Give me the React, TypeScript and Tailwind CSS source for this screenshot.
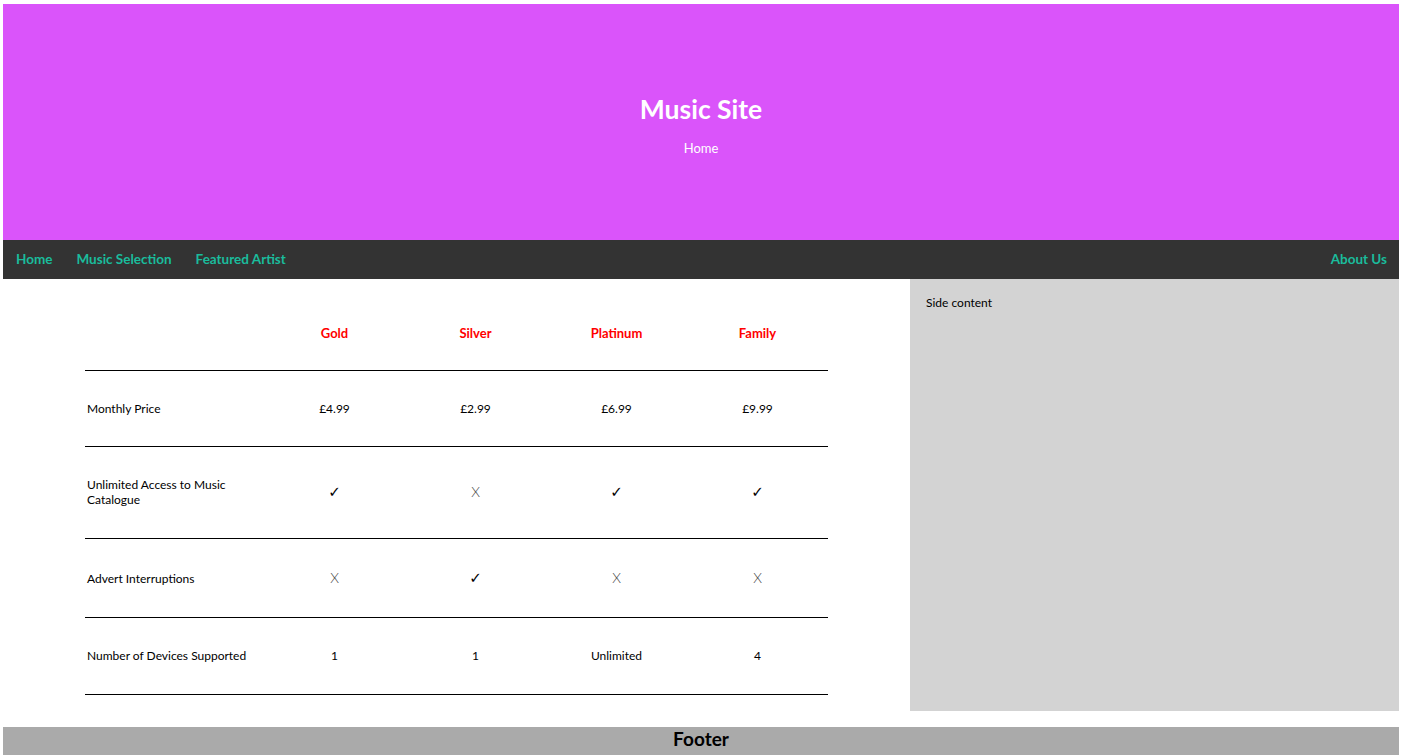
import React from "react";

const rows: { label: string; cells: string[]; pad: string }[] = [
  { label: "Monthly Price", cells: ["£4.99", "£2.99", "£6.99", "£9.99"], pad: "pt-[30px] pb-[30px]" },
  { label: "Unlimited Access to Music Catalogue", cells: ["✓", "X", "✓", "✓"], pad: "pt-[30px] pb-[31px]" },
  { label: "Advert Interruptions", cells: ["X", "✓", "X", "X"], pad: "pt-[30px] pb-[30px]" },
  { label: "Number of Devices Supported", cells: ["1", "1", "Unlimited", "4"], pad: "pt-[30px] pb-[31px]" },
];

function Cell({ v }: { v: string }) {
  if (v === "X")
    return <span className="font-light text-[14px] text-[#444]">X</span>;
  if (v === "✓")
    return (
      <span
        className="inline-block align-middle text-[15px] leading-[18px] text-black"
        style={{ fontFamily: "'DejaVu Sans', sans-serif" }}
      >
        ✓
      </span>
    );
  return <span>{v}</span>;
}

export default function App() {
  return (
    <div
      className="pl-[3px] pr-[5px] pt-[4px] bg-white text-black"
      style={{ fontFamily: "Lato, 'Open Sans', sans-serif" }}
    >
      <header className="bg-[#da54fa] h-[236px] flex flex-col items-center pt-[90px] text-white">
        <h1 className="text-[26.5px] leading-[30px] font-bold">Music Site</h1>
        <p className="mt-[16px] text-[13px] leading-[16px]">Home</p>
      </header>
      <nav className="bg-[#333333] h-[39px] flex items-center px-[1px] text-[13.5px] font-bold text-[#1abc9c]">
        <a className="px-[12px]">Home</a>
        <a className="px-[12px]">Music Selection</a>
        <a className="px-[12px]">Featured Artist</a>
        <a className="pl-[12px] pr-[11px] ml-auto">About Us</a>
      </nav>
      <div className="flex">
        <main className="w-[907px] py-[16px]">
          <table className="w-[743px] mx-auto border-collapse text-[12px] leading-[15px]">
            <thead>
              <tr className="border-b border-black">
                <th className="w-[179px] py-[30px]"></th>
                {["Gold", "Silver", "Platinum", "Family"].map((h) => (
                  <th key={h} className="w-[141px] pt-[31px] pb-[29px] text-center font-bold text-[13px] text-[#ff0000]">
                    {h}
                  </th>
                ))}
              </tr>
            </thead>
            <tbody>
              {rows.map((r) => (
                <tr key={r.label} className="border-b border-black">
                  <td className={`${r.pad} pl-[2px] pr-[4px] text-left align-middle`}>{r.label}</td>
                  {r.cells.map((c, i) => (
                    <td key={i} className={`${r.pad} text-center align-middle`}>
                      <Cell v={c} />
                    </td>
                  ))}
                </tr>
              ))}
            </tbody>
          </table>
        </main>
        <aside className="flex-1 bg-[#d3d3d3] p-[16px] text-[12px] leading-[15px]">Side content</aside>
      </div>
      <footer className="mt-[16px] bg-[#aaaaaa] h-[40px] text-center text-[19px] leading-[24px] font-bold">
        Footer
      </footer>
    </div>
  );
}
